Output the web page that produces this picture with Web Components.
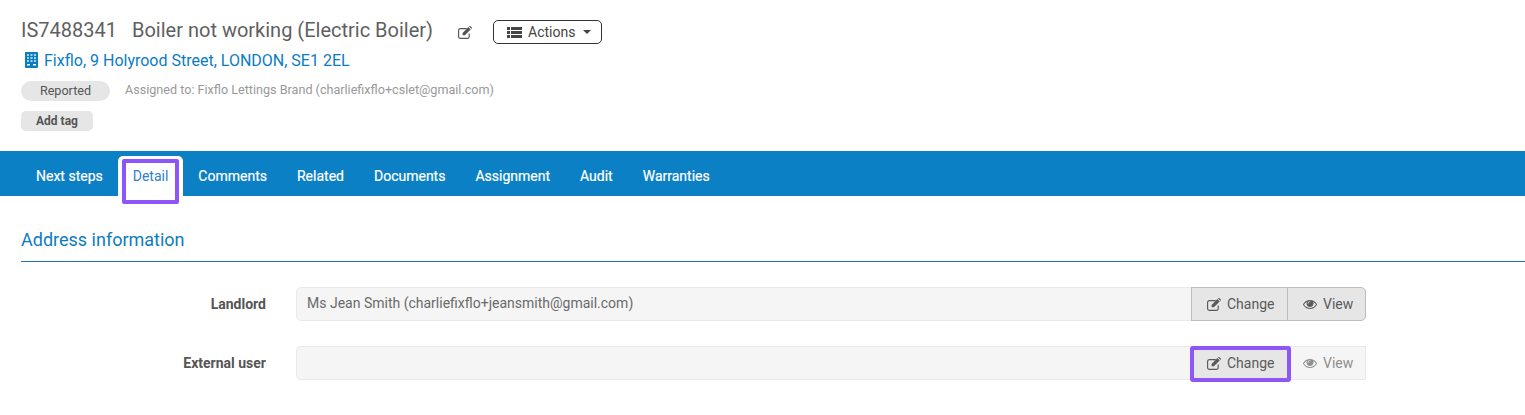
<!DOCTYPE html>
<html><head><meta charset="utf-8"><title>Issue</title>
<style>html,body{margin:0;padding:0;background:#fff}body{font-family:Roboto,sans-serif;overflow:hidden;height:415px}</style>
</head><body>
<issue-header></issue-header>
<issue-nav></issue-nav>
<issue-detail>
<issue-field label="Landlord" value="Ms Jean Smith (charliefixflo+jeansmith@gmail.com)"><field-btn kind="change">Change</field-btn><field-btn kind="view">View</field-btn></issue-field>
<issue-field label="External user" square><field-btn kind="change" mark>Change</field-btn><field-btn kind="view" off>View</field-btn></issue-field>
</issue-detail>
<script>
const EDIT=(c)=>`<svg width="14" height="13" viewBox="0 0 14 13" style="display:block;flex:none"><path fill="none" stroke="${c}" stroke-width="1.15" d="M8.800 2.600H2.400A1.800 1.800 0 0 0 .6 4.400V10.600A1.800 1.800 0 0 0 2.400 12.400H9.400A1.800 1.800 0 0 0 11.200 10.600V7.400"/><path fill="${c}" d="M4.600 6.900 10.400 1.100 12.700 3.400 6.900 9.200 4.600 9.200zM11 .5l.6-.4q.5-.2.9.1L13.800 1.500q.3.4.1.9L13.300 2.800z"/></svg>`;
const EYE=(c)=>`<svg width="14" height="14" viewBox="0 0 1792 1792" style="display:block;flex:none"><path fill="${c}" d="M1664 960q-152-236-381-353 61 104 61 225 0 185-131.500 316.500t-316.500 131.500-316.500-131.500-131.500-316.500q0-121 61-225-229 117-381 353 133 205 333.500 326.500t434.500 121.500 434.500-121.500 333.500-326.500zm-720-384q0-20-14-34t-34-14q-125 0-214.500 89.500t-89.500 214.500q0 20 14 34t34 14 34-14 14-34q0-86 61-147t147-61q20 0 34-14t14-34zm848 384q0 34-20 69-140 230-376.500 368.500t-499.500 138.500-499.500-139-376.500-368q-20-35-20-69t20-69q140-229 376.500-368t499.500-139 499.500 139 376.500 368q20 35 20 69z"/></svg>`;
function def(name,css,html){customElements.define(name,class extends HTMLElement{constructor(){super();this.attachShadow({mode:'open'}).innerHTML=`<style>${css}</style>${typeof html==='function'?html(this):html}`}})}

def('issue-header',`
:host{display:block;height:151px;box-sizing:border-box;padding:17px 21px 0;color:#5f5f5f}
.title{display:flex;align-items:center;height:26px;font-size:20px;line-height:26px}
.title .name{margin-left:15px}
.ed{margin-left:25px;margin-top:4px}
.act{margin-left:21px;margin-top:4px;display:flex;align-items:center;box-sizing:border-box;height:24px;width:109px;border:1px solid #333;border-radius:5px;font-size:14px;color:#444;padding-left:13px}
.act span{margin-left:6px}
.caret{width:0;height:0;border:4px solid transparent;border-top-color:#444;border-bottom:0;margin-left:8px}
.addr{display:flex;align-items:center;margin-top:4px;height:26px;color:#0c7cc1;font-size:16px}
.addr svg{margin-right:6px;margin-left:4px}
.meta{display:flex;align-items:center;margin-top:8px}
.pill{width:89px;height:20px;border-radius:10px;background:#e6e6e6;font-size:12.6px;line-height:20px;text-align:center;color:#555}
.as{margin-left:15px;font-size:12.6px;color:#999;margin-top:-3px}
.tag{margin-top:10px;width:72px;height:20px;border-radius:5px;background:#e6e6e6;font-size:12px;font-weight:700;line-height:20px;text-align:center;color:#555}
`,`<div class="title"><span>IS7488341</span><span class="name">Boiler not working (Electric Boiler)</span><span class="ed">${EDIT('#555')}</span>
<span class="act"><svg width="15" height="11" viewBox="0 0 15 11" fill="#444"><path d="M0 0h3v3H0zM4 0h11v3H4zM0 4h3v3H0zM4 4h11v3H4zM0 8h3v3H0zM4 8h11v3H4z"/></svg><span>Actions</span><i class="caret"></i></span></div>
<div class="addr"><svg width="13" height="16" viewBox="0 0 13 16"><rect width="13" height="16" rx="1" fill="#0c7cc1"/><path fill="#a9d0ea" d="M2 2h2v2H2zM5.500 2h2v2h-2zM9 2h2v2H9zM2 5h2v2H2zM5.500 5h2v2h-2zM9 5h2v2H9zM2 8h2v2H2zM5.500 8h2v2h-2zM9 8h2v2H9z"/><path fill="#fff" d="M2 12h9v1.500H2z"/><path fill="#0c7cc1" d="M5 12h3v4H5z"/></svg><span>Fixflo, 9 Holyrood Street, LONDON, SE1 2EL</span></div>
<div class="meta"><div class="pill">Reported</div><div class="as">Assigned to: Fixflo Lettings Brand (charliefixflo+cslet@gmail.com)</div></div>
<div class="tag">Add tag</div>`);

def('issue-nav',`
:host{display:flex;height:45px;background:#0c80c4;padding-left:21px;font-size:14px;font-weight:400;color:#fff;-webkit-text-stroke:.2px #fff}
a{display:block;padding:0 15px;line-height:51px;height:45px;white-space:nowrap}
.on{color:#2f7fcb;-webkit-text-stroke:0;position:relative}
.on::before{content:"";position:absolute;left:0;right:0;top:5px;bottom:0;background:#fff;border-radius:5px 5px 0 0}
.on::after{content:"";position:absolute;left:4px;right:4px;top:8px;bottom:-8px;border:4px solid #8e55f8;border-radius:2px;box-sizing:border-box}
.on span{position:relative}
`,`<a>Next steps</a><a class="on"><span>Detail</span></a><a>Comments</a><a>Related</a><a>Documents</a><a>Assignment</a><a>Audit</a><a>Warranties</a>`);

def('issue-field',`
:host{display:grid;grid-template-columns:245px 1fr;column-gap:30px;align-items:center;height:34px;margin-left:21px;color:#5f5f5f}
label{text-align:right;font-size:14px;font-weight:700;color:#555}
.box{display:flex;height:34px;box-sizing:border-box;background:#f5f5f5;border:1px solid #e9e9e9;border-radius:5px;width:1070px;font-size:14px;line-height:30px}
:host([square]) .box{border-radius:5px 0 0 5px}
.val{flex:1;padding-left:10px;color:#6a6a6a}
`,h=>`<label>${h.getAttribute('label')}</label><div class="box"><div class="val">${h.getAttribute('value')||''}</div><slot></slot></div>`);

def('field-btn',`
:host{display:flex;align-items:center;box-sizing:border-box;margin:-1px 0;height:34px;font-size:14px;color:#5a5a5a;background:#e6e6e6;border:1px solid #bdbdbd;position:relative}
:host([kind=change]){width:97px;margin-left:-1px;padding-left:15px;gap:6px}
:host([kind=view]){width:79px;margin-left:-1px;margin-right:-1px;padding-left:15px;gap:6px;border-radius:0 5px 5px 0}
:host([off]){background:transparent;border:0;color:#8f8f8f;margin-left:0;width:78px;padding-left:15px}
:host([mark]){border-width:0 1px 0 0;padding-left:16px;width:97px}
:host([mark])::after{content:"";position:absolute;left:-1px;right:-4px;top:0;bottom:-2px;border:4px solid #8e55f8;border-radius:3px}
`,h=>{const off=h.hasAttribute('off');const c=off?'#8f8f8f':'#5a5a5a';return (h.getAttribute('kind')==='change'?EDIT(c):EYE(c))+'<slot></slot>'});

def('issue-detail',`
:host{display:block;padding-top:32px}
h2{margin:0 0 0 21px;font-size:18px;font-weight:400;color:#0c7cc1;line-height:24px;height:33px;border-bottom:1px solid #2077b4}
.rows{display:flex;flex-direction:column;gap:25px;margin-top:25px}
`,`<h2>Address information</h2><div class="rows"><slot></slot></div>`);
</script>
</body></html>
